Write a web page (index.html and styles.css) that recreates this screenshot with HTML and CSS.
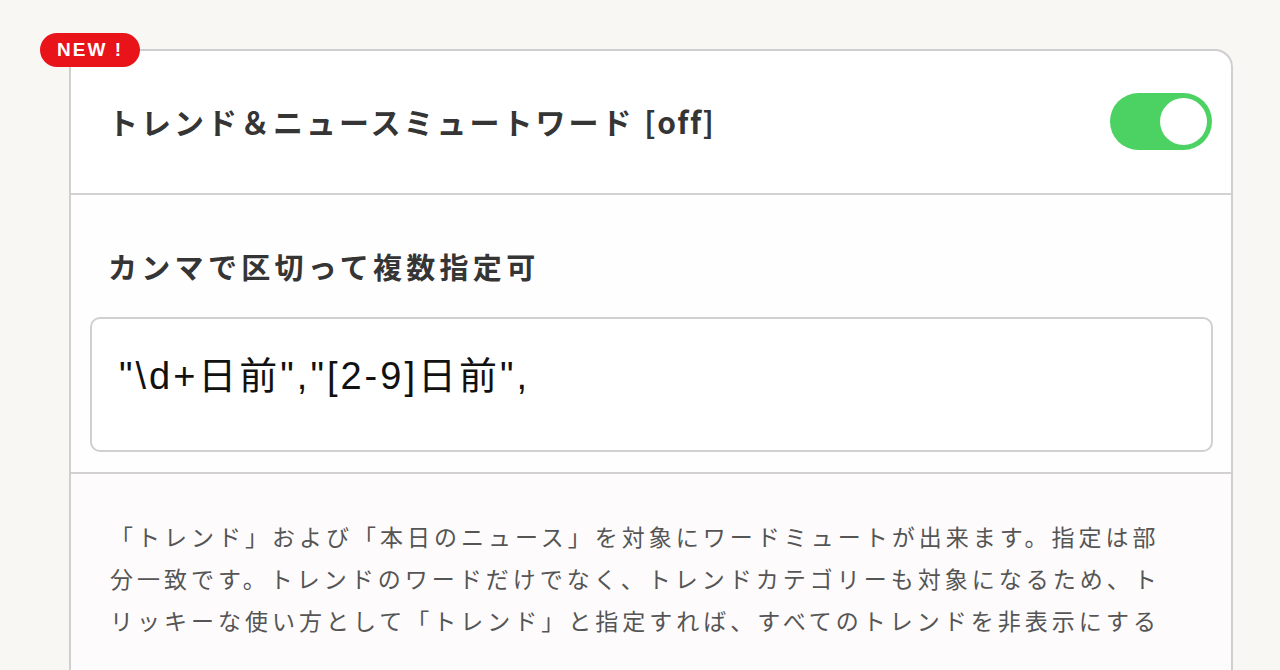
FILE: index.html
```html
<!DOCTYPE html>
<html lang="ja">
<head>
<meta charset="utf-8">
<title>トレンド＆ニュースミュートワード</title>
<link rel="stylesheet" href="styles.css">
</head>
<body>
  <div class="page">
    <section class="card">
      <span class="badge">NEW !</span>
      <header class="card-head">
        <h2 class="card-title">トレンド＆ニュースミュートワード <span class="state">[off]</span></h2>
        <span class="switch is-on" role="switch" aria-checked="true"><span class="knob"></span></span>
      </header>
      <div class="card-field">
        <h3 class="field-label">カンマで区切って複数指定可</h3>
        <div class="field-input">"\d+日前","[2-9]日前",</div>
      </div>
      <div class="card-note">
        <p>「トレンド」および「本日のニュース」を対象にワードミュートが出来ます。指定は部分一致です。トレンドのワードだけでなく、トレンドカテゴリーも対象になるため、トリッキーな使い方として「トレンド」と指定すれば、すべてのトレンドを非表示にする</p>
      </div>
    </section>
  </div>
</body>
</html>
```

FILE: styles.css
```css
html, body {
  margin: 0;
  padding: 0;
  background: #f8f7f3;
  height: 100%;
  overflow: hidden;
}

body {
  font-family: "Noto Sans CJK JP", "Noto Sans", sans-serif;
  color: #333;
}

.page {
  padding: 49px 47px 0 69px;
}

.card {
  position: relative;
  background: #fff;
  border: 2px solid #cfcfcf;
  border-bottom: none;
  border-radius: 18px 18px 0 0;
}

.badge {
  position: absolute;
  left: -31px;
  top: -18px;
  width: 100px;
  height: 34px;
  border-radius: 17px;
  background: #e9131a;
  color: #fff;
  font-family: "Liberation Sans", Arial, sans-serif;
  font-weight: 700;
  font-size: 19px;
  letter-spacing: 2px;
  line-height: 34px;
  text-align: center;
}

.card-head {
  height: 142px;
  display: flex;
  align-items: center;
  justify-content: space-between;
  padding: 0 19px 0 37px;
  border-bottom: 2px solid #d2d2d2;
  border-radius: 18px 18px 0 0;
}

.card-title {
  margin: -3px 0 0;
  font-size: 30px;
  font-weight: 700;
  letter-spacing: 3px;
  color: #353535;
}

.card-title .state {
  letter-spacing: 1.5px;
}

.switch {
  width: 102px;
  height: 57px;
  margin-top: -2px;
  border-radius: 29px;
  background: #4cd263;
  display: flex;
  align-items: center;
  justify-content: flex-end;
  padding: 0 5px;
  box-sizing: border-box;
}

.knob {
  width: 47px;
  height: 47px;
  border-radius: 50%;
  background: #fff;
}

.card-field {
  padding: 51px 18px 20px 19px;
  border-bottom: 2px solid #d2d2d2;
  background: #fefefe;
}

.field-label {
  margin: 0 0 31px 18px;
  font-size: 29px;
  line-height: 40px;
  font-weight: 700;
  letter-spacing: 4.3px;
  color: #353535;
}

.field-input {
  height: 135px;
  border: 2px solid #d0d0d0;
  border-radius: 10px;
  background: #fff;
  padding: 35px 0 0 27px;
  box-sizing: border-box;
  font-family: "Liberation Sans", "Noto Sans CJK JP", sans-serif;
  font-size: 38px;
  line-height: 44px;
  letter-spacing: 3px;
  color: #111;
}

.card-note {
  padding: 41px 60px 0 39px;
  background: #fdfbfb;
  height: 300px;
}

.card-note p {
  margin: 0;
  font-size: 23px;
  line-height: 42px;
  letter-spacing: 4px;
  color: #555;
}
```
